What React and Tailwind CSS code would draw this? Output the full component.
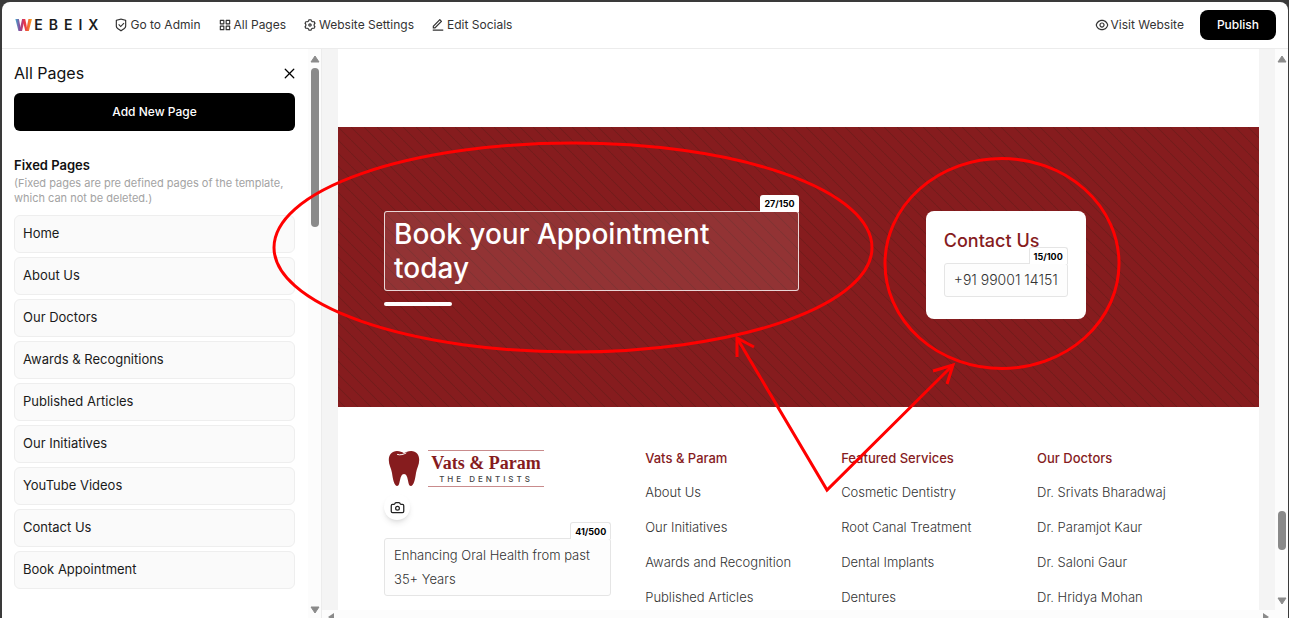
// ============================================================
// Webeix — Page editor (Tailwind CSS)
// ============================================================
import React from 'react';
import { Camera, X } from 'lucide-react';
import {
  RiShieldCheckLine,
  RiFunctionLine,
  RiSettings3Line,
  RiEditLine,
  RiEyeLine,
} from 'react-icons/ri';

const navItems = [
  { label: 'Go to Admin', Icon: RiShieldCheckLine },
  { label: 'All Pages', Icon: RiFunctionLine },
  { label: 'Website Settings', Icon: RiSettings3Line },
  { label: 'Edit Socials', Icon: RiEditLine },
];

const fixedPages = [
  'Home',
  'About Us',
  'Our Doctors',
  'Awards & Recognitions',
  'Published Articles',
  'Our Initiatives',
  'YouTube Videos',
  'Contact Us',
  'Book Appointment',
];

const footerColumns = [
  { title: 'Vats & Param', links: ['About Us', 'Our Initiatives', 'Awards and Recognition', 'Published Articles'] },
  { title: 'Featured Services', links: ['Cosmetic Dentistry', 'Root Canal Treatment', 'Dental Implants', 'Dentures'] },
  { title: 'Our Doctors', links: ['Dr. Srivats Bharadwaj', 'Dr. Paramjot Kaur', 'Dr. Saloni Gaur', 'Dr. Hridya Mohan'] },
];

/* ── Brand ── */
const Logo = () => (
  <a href="#home" aria-label="Webeix" className="flex items-center gap-0.5 mr-4 leading-none">
    <span className="text-base font-black bg-[linear-gradient(90deg,#3bb3d0,#8a4a9c_28%,#e8304a_55%,#f9a01b)] bg-clip-text text-transparent">W</span>
    <span className="text-[14px] font-semibold tracking-[6px] -mr-[6px] text-[#1c1c1c]">EBEIX</span>
  </a>
);

/* ── Top bar ── */
const TopBar = () => (
  <header className="flex items-center h-[47px] flex-shrink-0 pl-[13px] pr-3 border-b border-[#ececec]">
    <Logo />
    <nav className="flex items-center gap-[17px] flex-1">
      {navItems.map(({ label, Icon }) => (
        <a key={label} href="#nav" className="flex items-center gap-0.5 text-xs text-[#333] whitespace-nowrap">
          <Icon size={14} aria-hidden="true" />
          {label}
        </a>
      ))}
    </nav>
    <a href="#visit" className="flex items-center gap-0.5 mr-4 text-xs text-[#333] whitespace-nowrap">
      <RiEyeLine size={14} aria-hidden="true" />
      Visit Website
    </a>
    <button type="button" className="h-[30px] px-[17px] rounded-lg bg-black text-white text-xs font-medium">Publish</button>
  </header>
);

/* ── Scrollbar pieces ── */
const Arrow = ({ down = false }) => (
  <svg className="flex-shrink-0" width="10" height="8" viewBox="0 0 10 8" aria-hidden="true">
    <path d={down ? 'M1 1h8L5 7z' : 'M1 7h8L5 1z'} fill="#8a8a8a" stroke="#8a8a8a" strokeLinejoin="round" />
  </svg>
);

const SideArrow = ({ right = false }) => (
  <svg width="8" height="10" viewBox="0 0 8 10" aria-hidden="true">
    <path d={right ? 'M1 1v8l6-4z' : 'M7 1v8L1 5z'} fill="#8a8a8a" />
  </svg>
);

/* ── Left panel ── */
const Sidebar = () => (
  <aside className="flex w-[320px] flex-shrink-0 border-r border-[#ececec]">
    <div className="flex-1 min-w-0 pt-3 pl-3 pr-[13px]">
      <div className="flex items-center justify-between h-6 mb-2">
        <h2 className="text-base text-[#111]">All Pages</h2>
        <button type="button" aria-label="Close" className="-mr-[3px]">
          <X size={17} strokeWidth={1.75} />
        </button>
      </div>
      <button type="button" className="w-full h-[38px] rounded-md bg-black text-white text-xs font-medium">Add New Page</button>
      <h3 className="mt-6 text-[13px] leading-5 font-semibold text-[#111]">Fixed Pages</h3>
      <p className="mt-px text-[11px] leading-[15px] text-[#a3a3a3]">
        (Fixed pages are pre defined pages of the template, which can not be deleted.)
      </p>
      <ul className="flex flex-col gap-1 mt-[9px]">
        {fixedPages.map((page) => (
          <li key={page}>
            <a href="#page" className="flex items-center h-[38px] px-2 rounded-md border border-[#eee] bg-[#fafafa] text-[13px] text-[#1a1a1a]">
              {page}
            </a>
          </li>
        ))}
      </ul>
    </div>
    <div className="flex flex-col items-center w-[13px] pt-1.5 pb-1 bg-[#fcfcfc]">
      <Arrow />
      <div className="w-2 h-[159px] mt-[5px] rounded-full bg-[#8a8a8a]" />
      <div className="flex-1" />
      <Arrow down />
    </div>
  </aside>
);

/* ── Editable text box with its character count ── */
const Counter = ({ children, className = '' }) => (
  <span className={`absolute -right-px bottom-full h-[17px] px-1 rounded-t-[3px] bg-white text-[9px] leading-[18px] font-bold text-black ${className}`}>
    {children}
  </span>
);

/* ── Red banner, thin diagonal stripes on a 13px tile ── */
const stripes = 'bg-[#861c1e] bg-[linear-gradient(45deg,transparent_45%,#751b1b_50%,transparent_55%)] bg-[size:13px_13px]';

const Banner = () => (
  <section className={`flex items-start h-[280px] px-[46px] pt-[84px] ${stripes}`}>
    <div className="w-1/2">
      <div className="relative px-[9px] py-[5px] rounded-[3px] border border-white/80 bg-white/10">
        <Counter>27/150</Counter>
        <h1 className="text-[28px] leading-[34px] font-medium text-white">
          Book your Appointment
          <br />
          today
        </h1>
      </div>
      <div className="w-[68px] h-1 mt-[11px] rounded-full bg-white" />
    </div>
    <div className="flex w-1/2 justify-center">
      <div className="h-[108px] px-[18px] pt-[18px] rounded-lg bg-white">
        <h2 className="text-lg leading-6 font-medium text-[#861c1e]">Contact Us</h2>
        <div className="relative mt-[10px] h-[34px] px-[9px] rounded-[3px] border border-[#e5e5e5] bg-[#fdfdfd] text-sm leading-8 font-light text-[#333] whitespace-nowrap">
          <Counter className="border border-b-0 border-[#e5e5e5]">15/100</Counter>
          +91 99001 14151
        </div>
      </div>
    </div>
  </section>
);

/* ── Clinic logo ── */
const ClinicLogo = () => (
  <div className="flex items-center gap-2 pl-1">
    <svg width="32" height="37" viewBox="0 0 32 37" aria-hidden="true">
      <path
        d="M9 1C4 1 .8 4.500.8 10c0 5 2.400 8 3.200 13 .8 6 2.200 13 5.200 13 3.400 0 2-12 6.800-12s3.400 12 6.800 12c3 0 4.400-7 5.200-13 .8-5 3.200-8 3.200-13 0-5.500-3-9-8-9-3.400 0-5 1-7.200 2.200C13.800 2 12 1 9 1z"
        fill="#861c1e"
      />
      <path d="M9.500 4.500c3 1 6-.2 8.500-1.500" fill="none" stroke="#fff" strokeWidth="1" strokeLinecap="round" />
    </svg>
    <div className="flex flex-col items-center w-[116px] h-[37px] border-y border-[#c98b8c]">
      <span className="font-['Liberation_Serif',serif] text-lg leading-6 font-bold text-[#861c1e] whitespace-nowrap">Vats &amp; Param</span>
      <span className="text-[8px] leading-[9px] font-medium tracking-[3px] text-[#444] whitespace-nowrap">THE DENTISTS</span>
    </div>
  </div>
);

/* ── Site footer ── */
const SiteFooter = () => (
  <footer className="grid grid-cols-[4fr_3fr_3fr_3fr] pl-[46px] pr-[26px] pt-[43px]">
    <div className="pr-[34px]">
      <ClinicLogo />
      <button type="button" aria-label="Change logo" className="flex items-center justify-center w-[26px] h-[26px] mt-[7px] rounded-full bg-white shadow-md text-[#222]">
        <Camera size={15} />
      </button>
      <div className="relative mt-[18px] px-[9px] py-1 rounded-[3px] border border-[#e5e5e5] bg-[#fdfdfd] text-[13px] leading-6 font-light text-[#333]">
        <Counter className="border border-b-0 border-[#e5e5e5]">41/500</Counter>
        Enhancing Oral Health from past 35+ Years
      </div>
    </div>
    {footerColumns.map(({ title, links }) => (
      <div key={title}>
        <h3 className="text-[13px] leading-4 font-medium text-[#861c1e]">{title}</h3>
        <ul className="flex flex-col gap-[15px] mt-4">
          {links.map((link) => (
            <li key={link} className="text-[13px] leading-5 font-light whitespace-nowrap">
              <a href="#link" className="text-[#333]">{link}</a>
            </li>
          ))}
        </ul>
      </div>
    ))}
  </footer>
);

/* ── Hand drawn marks above the page ── */
const Annotations = () => (
  <svg className="absolute top-0 left-0 pointer-events-none" width="1289" height="618" viewBox="0 0 1289 618" fill="none" stroke="#ff0000" strokeWidth="3" aria-hidden="true">
    <ellipse cx="573" cy="247.500" rx="299" ry="104.500" />
    <ellipse cx="1002" cy="263.500" rx="117" ry="105" />
    <path d="M737 338L827 490L953 365" />
    <path d="M737 357V338L754 347M933 371L953 365L947 384" />
  </svg>
);

export default function App() {
  return (
    <div className="relative h-screen overflow-hidden pt-0.5 pl-0.5 pr-px bg-[#3a3a3a] font-['Inter',sans-serif]">
      <div className="flex flex-col h-full rounded-t-lg overflow-hidden bg-white">
        <TopBar />
        <div className="flex flex-1 min-h-0">
          <Sidebar />
          <div className="flex flex-col flex-1 min-w-0">
            <div className="flex flex-1 min-h-0">
              <main className="flex-1 min-w-0 px-4 overflow-hidden bg-[#f4f4f4]">
                <div className="h-full pt-[78px] overflow-hidden bg-white">
                  <Banner />
                  <SiteFooter />
                </div>
              </main>
              <div className="flex flex-col items-center w-[13px] pt-1.5 pb-[5px] bg-[#fcfcfc]">
                <Arrow />
                <div className="flex-1" />
                <div className="w-2 h-[39px] mb-[47px] rounded-full bg-[#8a8a8a]" />
                <Arrow down />
              </div>
            </div>
            <div className="flex justify-between h-2 pt-0.5 pl-[5px] pr-[18px] bg-[#fcfcfc] overflow-hidden">
              <SideArrow />
              <SideArrow right />
            </div>
          </div>
        </div>
      </div>
      <Annotations />
    </div>
  );
}
